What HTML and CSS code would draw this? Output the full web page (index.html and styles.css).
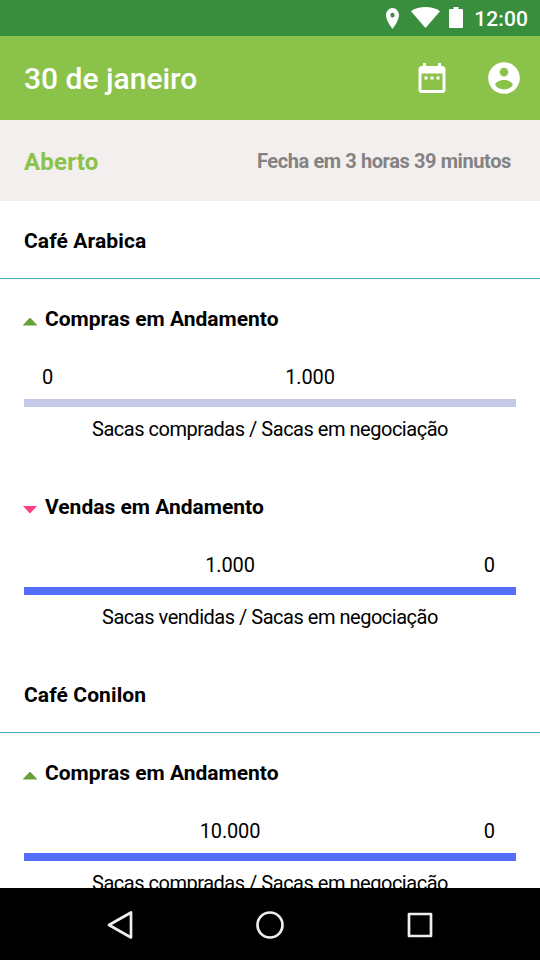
FILE: index.html
```html
<!DOCTYPE html>
<html lang="pt-BR">
<head>
  <meta charset="UTF-8">
  <meta name="viewport" content="width=device-width, initial-scale=1.0">
  <title>30 de janeiro</title>
  <link rel="stylesheet" href="styles.css">
</head>
<body>
  <div class="statusbar">
    <svg class="pin" viewBox="5 2 14 20" preserveAspectRatio="none"><path d="M12 2C8.130 2 5 5.130 5 9c0 5.250 7 13 7 13s7-7.750 7-13c0-3.870-3.130-7-7-7zm0 9a2.200 2.200 0 1 1 0-4.400 2.200 2.200 0 0 1 0 4.400z"/></svg>
    <svg class="wifi" viewBox="0 0 29 21"><path d="M14.500 21L0 4.200C4 1.400 9 0 14.500 0S25 1.400 29 4.200z"/></svg>
    <svg class="battery" viewBox="0 0 14 21"><path d="M4.500 0h5v2H13a1 1 0 0 1 1 1v17a1 1 0 0 1-1 1H1a1 1 0 0 1-1-1V3a1 1 0 0 1 1-1h3.500z"/></svg>
    <span class="clock">12:00</span>
  </div>

  <header class="toolbar">
    <h1>30 de janeiro</h1>
    <svg class="calendar" viewBox="0 0 24 24"><path d="M9 11H7v2h2v-2zm4 0h-2v2h2v-2zm4 0h-2v2h2v-2zm2-7h-1V2h-2v2H8V2H6v2H5c-1.110 0-1.990.9-1.990 2L3 20c0 1.100.89 2 2 2h14c1.100 0 2-.9 2-2V6c0-1.100-.9-2-2-2zm0 16H5V9h14v11z"/></svg>
    <svg class="account" viewBox="0 0 24 24"><path d="M12 2C6.480 2 2 6.480 2 12s4.480 10 10 10 10-4.480 10-10S17.520 2 12 2zm0 3.500c1.500 0 2.700 1.200 2.700 2.800S13.500 11 12 11 9.300 9.800 9.300 8.300s1.200-2.800 2.700-2.800zm0 13.700c-2.500 0-4.400-1.100-5.600-2.800.03-1.990 3.700-3.080 5.600-3.080s5.570 1.090 5.600 3.080c-1.200 1.700-3.100 2.800-5.600 2.800z"/></svg>
  </header>

  <div class="market">
    <span class="market-status">Aberto</span>
    <span class="market-time">Fecha em 3 horas 39 minutos</span>
  </div>

  <main class="content">
    <h2>Café Arabica</h2>

    <section class="deal">
      <h3><i class="arrow up"></i>Compras em Andamento</h3>
      <div class="values">
        <span class="none">0</span>
        <span class="total">1.000</span>
      </div>
      <div class="bar"></div>
      <p>Sacas compradas / Sacas em negociação</p>
    </section>

    <section class="deal">
      <h3><i class="arrow down"></i>Vendas em Andamento</h3>
      <div class="values">
        <span class="total">1.000</span>
        <span class="none">0</span>
      </div>
      <div class="bar full"></div>
      <p>Sacas vendidas / Sacas em negociação</p>
    </section>

    <h2>Café Conilon</h2>

    <section class="deal">
      <h3><i class="arrow up"></i>Compras em Andamento</h3>
      <div class="values">
        <span class="total">10.000</span>
        <span class="none">0</span>
      </div>
      <div class="bar full"></div>
      <p>Sacas compradas / Sacas em negociação</p>
    </section>
  </main>

  <nav class="navbar">
    <svg viewBox="0 0 30 30"><path d="M26 2.500v25L4 15z"/></svg>
    <svg viewBox="0 0 30 30"><circle cx="15" cy="15" r="12.500"/></svg>
    <svg viewBox="0 0 30 30"><rect x="4" y="4" width="22" height="22"/></svg>
  </nav>
</body>
</html>
```

FILE: styles.css
```css
* {
  box-sizing: border-box;
}
body {
  font-family: Roboto, sans-serif;
  font-size: 20px;
  color: #000;
  background: #fff;
  margin: 0;
  height: 960px;
  display: flex;
  flex-direction: column;
  overflow: hidden;
}
h1, h2, h3, p {
  margin: 0;
}

.statusbar {
  height: 36px;
  flex: none;
  background: #388e3c;
  color: #fff;
  display: flex;
  align-items: center;
  justify-content: flex-end;
  padding: 0 12px;
}
.statusbar svg, .toolbar svg {
  fill: #fff;
}
.pin {
  width: 13px;
  height: 21px;
  margin-right: 12px;
}
.wifi {
  width: 29px;
  height: 21px;
  margin: 0 9px 2px 0;
}
.battery {
  width: 14px;
  height: 21px;
  margin: 0 11px 1px 0;
}
.clock {
  font-size: 21px;
  font-weight: 500;
  letter-spacing: 0.1px;
  margin-top: 1px;
}

.toolbar {
  height: 84px;
  flex: none;
  background: #8bc34a;
  color: #fff;
  display: flex;
  align-items: center;
  padding: 0 17px 0 24px;
}
.toolbar h1 {
  font-size: 30px;
  font-weight: 500;
  flex: 1;
}
.calendar {
  width: 36px;
  height: 36px;
  margin-right: 35px;
}
.account {
  width: 38px;
  height: 38px;
}

.market {
  height: 81px;
  flex: none;
  background: #f3efee;
  display: flex;
  align-items: center;
  justify-content: space-between;
  padding: 0 29px 0 24px;
  font-weight: 700;
}
.market-status {
  font-size: 24px;
  letter-spacing: 0.2px;
  padding-top: 2px;
  color: #8bc34a;
}
.market-time {
  color: #848383;
  letter-spacing: -0.4px;
}

.content {
  flex: 1;
  min-height: 0;
  overflow: hidden;
}
h2 {
  height: 78px;
  line-height: 81px;
  padding-left: 24px;
  border-bottom: 1px solid #45adc6;
  font-size: 21px;
  letter-spacing: 0.1px;
  font-weight: 700;
}
.deal {
  height: 188px;
  padding: 0 24px;
}
.deal h3 {
  height: 80px;
  display: flex;
  align-items: center;
  font-size: 21px;
  font-weight: 700;
}
.arrow {
  width: 15px;
  height: 8px;
  margin: 5px 7.500px 0 -1.500px;
}
.up {
  background: #689f38;
  clip-path: polygon(50% 0, 100% 100%, 0 100%);
}
.down {
  background: #ff4081;
  clip-path: polygon(0 0, 100% 0, 50% 100%);
}
.values {
  height: 40px;
  line-height: 36px;
  display: flex;
}
.total {
  flex: 1;
  text-align: center;
  letter-spacing: -0.15px;
}
.none {
  width: 80px;
  padding-left: 18px;
}
.total + .none {
  padding: 0 21px 0 0;
  text-align: right;
}
.bar {
  height: 8px;
  background: #c5cae9;
}
.bar.full {
  background: #536dfe;
}
.deal p {
  line-height: 44px;
  text-align: center;
  letter-spacing: -0.48px;
}

.navbar {
  height: 72px;
  flex: none;
  background: #000;
  display: flex;
  align-items: center;
  justify-content: center;
  gap: 120px;
  padding-top: 1px;
}
.navbar svg {
  width: 30px;
  height: 30px;
  fill: none;
  stroke: #eee;
  stroke-width: 2.7;
  stroke-linejoin: round;
}
```
